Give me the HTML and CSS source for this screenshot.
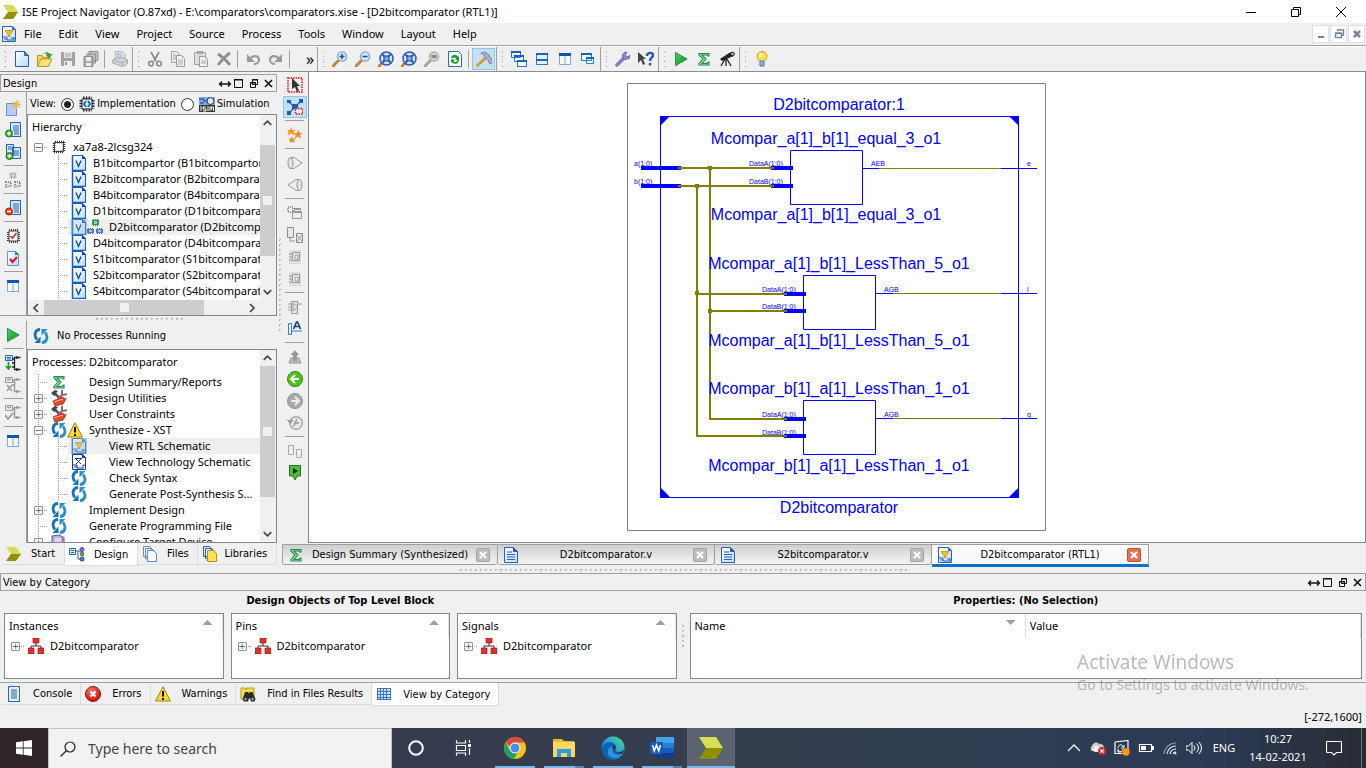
FILE: index.html
```html
<!DOCTYPE html>
<html lang="en">
<head>
<meta charset="utf-8">
<title>ISE Project Navigator</title>
<link rel="stylesheet" href="styles.css">
</head>
<body>
<svg class="defs" aria-hidden="true">
<defs>
<linearGradient id="gPage" x1="0" y1="0" x2="1" y2="1"><stop offset="0" stop-color="#fff"/><stop offset="1" stop-color="#b9dcfb"/></linearGradient>
<linearGradient id="gGreen" x1="0" y1="0" x2="1" y2="1"><stop offset="0" stop-color="#5ad06a"/><stop offset="1" stop-color="#0a8a20"/></linearGradient>
<radialGradient id="gRed" cx=".4" cy=".3" r=".7"><stop offset="0" stop-color="#ff7a66"/><stop offset="1" stop-color="#c80d0d"/></radialGradient>
<linearGradient id="gEdge" x1="0" y1="1" x2="1" y2="0"><stop offset="0" stop-color="#0c59a4"/><stop offset=".5" stop-color="#1b9de2"/><stop offset="1" stop-color="#5be26b"/></linearGradient>
</defs>
<symbol id="ise" viewBox="0 0 16 16"><path d="M0 1h10l5 7H5z" fill="#d8dc55"/><path d="M5 8h10l-5 7H0z" fill="#8f9200"/></symbol>
<symbol id="rtl" viewBox="0 0 16 16"><path d="M1.500.5h10l3 3v12h-13z" fill="url(#gPage)" stroke="#2a62b8"/><path d="M11 0v4h4z" fill="#3b78cc"/><path d="M4 4.500h8L9 8.500v2H7v-2z" fill="#f2c21a" stroke="#b98a00" stroke-width=".7"/><path d="M2 11h4v3h7v-2M10 12h4M3 13h3" fill="none" stroke="#2a62b8"/></symbol>
<symbol id="tech" viewBox="0 0 16 16"><path d="M1.500.5h10l3 3v12h-13z" fill="#fff" stroke="#14429a"/><path d="M11 0v4h4z" fill="#2a2ad0"/><path d="M4 4.500h7M5 5l5 5M10 5l-5 5M2 11h4v3h6v-3h2M3 13h3" fill="none" stroke="#123a90"/></symbol>
<symbol id="v" viewBox="0 0 16 16"><path d="M1.500.5h10l3 3v12h-13z" fill="url(#gPage)" stroke="#0d62b5"/><path d="M1.500.5v15h13" fill="none" stroke="#0d62b5" stroke-width="1.500"/><path d="M11 0v4h4z" fill="#2c37b0"/><path d="M5 5.500l2.500 6 2.500-6" fill="none" stroke="#0b3f7a" stroke-width="1.200"/></symbol>
<symbol id="new" viewBox="0 0 16 16"><path d="M1.500.5h9l4 4v11h-13z" fill="url(#gPage)" stroke="#2a5ea8"/><path d="M10.500.5v4h4z" fill="#5f95d6" stroke="#2a5ea8"/></symbol>
<symbol id="open" viewBox="0 0 16 16"><path d="M.5 15V4.500H5l1 2h6v2" fill="#f5d35a" stroke="#c29410"/><path d="M.5 15.500L4 8h11l-4 7.500z" fill="#ffe27a" stroke="#c29410"/><path d="M6 4c1-3 5-4 7-1h2.500L12 8 8.500 3.500h2C9 2 7 2.500 6 4z" fill="#2fa83a"/></symbol>
<symbol id="save" viewBox="0 0 16 16"><path d="M1 1h14v14H1z" fill="#a2a2a2"/><path d="M4 1h8v6H4z" fill="#e4e4e4"/><path d="M5 3h6M5 5h6" stroke="#a2a2a2"/><path d="M4 10h8v5H4z" fill="#efefef"/><path d="M5 11h2v3H5z" fill="#999"/></symbol>
<symbol id="saveall" viewBox="0 0 16 16"><path d="M6 .5h9v9H6zM3.500 3h9v9h-9z" fill="#c4c4c4" stroke="#8e8e8e"/><path d="M1 5.500h9v10H1z" fill="#a8a8a8" stroke="#8e8e8e"/><path d="M3 6h5v4H3zM3 12h5v3H3z" fill="#eee"/></symbol>
<symbol id="print" viewBox="0 0 16 16"><path d="M4 8L3 .5h7l3 3V8" fill="#d9e3ee" stroke="#b0b6bd"/><path d="M1 8.500L4 7h9l2.500 2v3.500l-5 3L.5 12z" fill="#d4d4d4" stroke="#a8a8a8"/><path d="M1 9l9.500 3L15 9M10.500 12v3" fill="none" stroke="#a8a8a8"/><path d="M5 3h4M5 5h5" stroke="#9fb3c8"/></symbol>
<symbol id="cut" viewBox="0 0 16 16"><path d="M4 1l5 9M12 1L7 10" stroke="#8c8c8c" stroke-width="1.700"/><circle cx="4" cy="12.500" r="2.300" fill="none" stroke="#8c8c8c" stroke-width="1.600"/><circle cx="12" cy="12.500" r="2.300" fill="none" stroke="#8c8c8c" stroke-width="1.600"/></symbol>
<symbol id="copy" viewBox="0 0 16 16"><path d="M1.500.5h5l3 3v8h-8z" fill="#eee" stroke="#a3a3a3"/><path d="M6.500 4.500h5l3 3v8h-8z" fill="#f2f2f2" stroke="#9a9a9a"/><path d="M8 9h5M8 11h5M8 13h5M3 4h3M3 6h3M3 8h3" stroke="#aaa"/></symbol>
<symbol id="paste" viewBox="0 0 16 16"><path d="M1.500 1.500h11v12h-11z" fill="#dedede" stroke="#a3a3a3"/><path d="M4.500.5h5v2h-5z" fill="#bbb" stroke="#999"/><path d="M6.500 5.500h5l3 3v7h-8z" fill="#f2f2f2" stroke="#9a9a9a"/><path d="M8 10h5M8 12h5" stroke="#aaa"/></symbol>
<symbol id="del" viewBox="0 0 16 16"><path d="M2 3c5 3 8 6 12 11M14 2C9 5 6 9 2 14" fill="none" stroke="#8f8f8f" stroke-width="2.800"/></symbol>
<symbol id="undo" viewBox="0 0 16 16"><path d="M5 8c3-4 9-4 9 1 0 2-2 4-5 4" fill="none" stroke="#9a9a9a" stroke-width="2.200"/><path d="M2 3v8h8z" fill="#9a9a9a"/></symbol>
<symbol id="redo" viewBox="0 0 16 16"><path d="M11 8C8 4 2 4 2 9c0 2 2 4 5 4" fill="none" stroke="#9a9a9a" stroke-width="2.200"/><path d="M14 3v8H6z" fill="#9a9a9a"/></symbol>
<symbol id="zin" viewBox="0 0 16 16"><path d="M1 15l5-5" stroke="#c98432" stroke-width="3" stroke-linecap="round"/><circle cx="10" cy="5.500" r="4.600" fill="#d4e7fb" stroke="#7fa3d8" stroke-width="1.300"/><path d="M7.500 5.500h5M10 3v5" stroke="#1749a8" stroke-width="1.500"/></symbol>
<symbol id="zout" viewBox="0 0 16 16"><path d="M1 15l5-5" stroke="#c98432" stroke-width="3" stroke-linecap="round"/><circle cx="10" cy="5.500" r="4.600" fill="#d4e7fb" stroke="#7fa3d8" stroke-width="1.300"/><path d="M7.500 5.500h5" stroke="#1749a8" stroke-width="1.500"/></symbol>
<symbol id="zfit" viewBox="0 0 16 16"><path d="M1 15l3-3" stroke="#c98432" stroke-width="3" stroke-linecap="round"/><circle cx="8.500" cy="7.500" r="6.500" fill="#cfe2fb" stroke="#2b5bb5" stroke-width="1.500"/><path d="M4.500 3.500l8 8M12.500 3.500l-8 8" stroke="#153f93" stroke-width="1.600"/><path d="M6 5h5v5H6z" fill="#7fa8e6" stroke="#153f93"/></symbol>
<symbol id="zgray" viewBox="0 0 16 16"><path d="M1 15l5-5" stroke="#a5a5a5" stroke-width="3" stroke-linecap="round"/><circle cx="10" cy="5.500" r="4.600" fill="#d0d0d0" stroke="#aaa" stroke-width="1.300"/><path d="M7.500 4h5v3h-5z" fill="#888"/></symbol>
<symbol id="refresh" viewBox="0 0 16 16"><path d="M1.500.5h10l3 3v12h-13z" fill="#fff" stroke="#3568b0"/><path d="M4 7c1-4 6-4 7-1l1-1v4H8l1.500-1C8 6 6 6 5.500 7.500zM12 9c-1 5-6 4.500-7 2l-1 1V8.500h4L6.500 10c1 1.500 3 1.500 4-1z" fill="#159a2e"/></symbol>
<symbol id="hammer" viewBox="0 0 16 16"><path d="M1.500 14.500L10 6.500" stroke="#e09a28" stroke-width="3" stroke-linecap="round"/><path d="M5 2l4-1 4 3 3 5-1 4-2-1-1-3-3-2-1-3z" fill="#a9b0c2" stroke="#747c92" stroke-width=".8"/></symbol>
<symbol id="cascade" viewBox="0 0 16 16"><path d="M.5.500h9v6h-9zM3.500 4.500h9v6h-9zM6.500 9.500h9v6h-9z" fill="#f5faff" stroke="#2876c4"/><path d="M0 1h10M3 5h10M6 10h10" stroke="#1766bd" stroke-width="2"/></symbol>
<symbol id="tileh" viewBox="0 0 16 16"><path d="M2.500 2.500h11v11h-11z" fill="#e2f0fd" stroke="#2876c4"/><path d="M2 3h12M2 9h12" stroke="#1766bd" stroke-width="2"/></symbol>
<symbol id="tilev" viewBox="0 0 16 16"><path d="M2.500 2.500h11v11h-11z" fill="#f6faff" stroke="#7fa9d6"/><path d="M8 3v11" stroke="#7fa9d6"/><path d="M2 3.500h12" stroke="#0f55a8" stroke-width="3"/></symbol>
<symbol id="float" viewBox="0 0 16 16"><path d="M1.500 2.500h10v7h-10zM6.500 6.500h7v6h-7z" fill="#eef6fe" stroke="#3080c8"/><path d="M1 3h11M6 7h8" stroke="#1766bd" stroke-width="2"/></symbol>
<symbol id="wrench" viewBox="0 0 16 16"><path d="M2 14l7-7" stroke="#7f7fc8" stroke-width="3.500" stroke-linecap="round"/><path d="M8 7a4 4 0 0 1 4-6L10.500 4 12 6l3-1.500A4 4 0 0 1 8 7z" fill="#8a8ad2" stroke="#5c5cab" stroke-width=".8"/></symbol>
<symbol id="whats" viewBox="0 0 16 16"><path d="M0 1v11l3-3 2 5 2-1-2-5h3z" fill="#444"/><path d="M9 5c0-4 6-4 6-1 0 3-3 2-3 6" fill="none" stroke="#2b58b0" stroke-width="2.400"/><path d="M10.800 12h2.500v2.500h-2.500z" fill="#2b58b0"/></symbol>
<symbol id="run" viewBox="0 0 16 16"><path d="M2.500 1.500L14 8 2.500 14.500z" fill="url(#gGreen)" stroke="#1b9a35"/></symbol>
<symbol id="sigma" viewBox="0 0 16 16"><path d="M3 2.500h10V5h-1L11 4H6l4 4-4 4.500h5L12 11h1v3H3v-1.500L7 8 3 4z" fill="#a9dfb5" stroke="#1d8b47" stroke-width="1.100"/></symbol>
<symbol id="scope" viewBox="0 0 16 16"><path d="M1 8l9-6 3-1 2 4-3 1-9 4z" fill="#222"/><circle cx="13.500" cy="3" r="1.800" fill="#8dd7f2" stroke="#111"/><path d="M6 8l-4 7M7 8v7M8 8l4 7" stroke="#222" stroke-width="1.300"/></symbol>
<symbol id="bulb" viewBox="0 0 16 16"><circle cx="8" cy="5.500" r="5" fill="#ffe14d" stroke="#e1a311"/><circle cx="6.500" cy="4" r="2" fill="#fff8b8"/><path d="M6 10h4v5H6z" fill="#84b6e6" stroke="#4a79ab"/></symbol>
<symbol id="cursor" viewBox="0 0 16 16"><path d="M1 1h14v14H1z" fill="none" stroke="#e11" stroke-width="1.500" stroke-dasharray="1.500 1"/><path d="M5 1v11l3-2 2 5 2-1-2-5h3z" fill="#333"/></symbol>
<symbol id="zoomsel" viewBox="0 0 16 16"><path d="M1 2l12 11M15 1L2 14" stroke="#2b62ae" stroke-width="1.400"/><path d="M0 1h4v3H0zM12 0h4v4h-4zM0 12h4v4H0zM5 5h6v5H5z" fill="#225ba9"/><path d="M8.500 9.500h7v5.500h-7z" fill="#e7f2fc" stroke="#e11" stroke-width="1.300" stroke-dasharray="1.500 1"/></symbol>
<symbol id="stars" viewBox="0 0 16 16"><path d="M4 0l1.500 3H9L6.500 5l1 3.500L4 6.500 1 8.500 1.500 5 0 3h3z" fill="#f59a1d"/><path d="M11 3l1.500 3h3L13 8l1 3.500-3-2-3 2L8.500 8 7 6h3zM5 9l1 2.500h3L7 13l.5 3L5 14.500 2.500 16l.5-3-2-1.500h3z" fill="#f28b2a"/></symbol>
<symbol id="conein" viewBox="0 0 16 16"><path d="M3 2.500h4l8 5.500-8 5.500H3z" fill="#eee" stroke="#999"/><ellipse cx="3.500" cy="8" rx="2.500" ry="5.500" fill="#e4e4e4" stroke="#999"/></symbol>
<symbol id="coneout" viewBox="0 0 16 16"><path d="M13 2.500H9L1 8l8 5.500h4z" fill="#eee" stroke="#999"/><ellipse cx="12.500" cy="8" rx="2.500" ry="5.500" fill="#e4e4e4" stroke="#999"/></symbol>
<symbol id="gwin" viewBox="0 0 16 16"><path d="M1 2h5v5H1z" fill="none" stroke="#999" stroke-width="2" stroke-dasharray="1 1"/><path d="M5.500 6.500h9v7h-9z" fill="#eee" stroke="#999"/><path d="M7 4h7M5 7h10" stroke="#999" stroke-width="2"/></symbol>
<symbol id="gpush" viewBox="0 0 16 16"><path d="M.5.500h6v10h-6zM9.500 6.500h6v9h-6z" fill="#e8e8e8" stroke="#8d8d8d"/><path d="M3 11v3h5M10 8l5 6M15 8l-5 6" stroke="#999" fill="none"/></symbol>
<symbol id="gchip" viewBox="0 0 16 16"><path d="M2 1h12v14H2z" fill="#ddd"/><path d="M5.500 3.500h7v8h-7z" fill="#eee" stroke="#999"/><path d="M2 5h3M2 8h3M2 11h3M8 6h3v4H8z" fill="none" stroke="#999"/></symbol>
<symbol id="ggate" viewBox="0 0 16 16"><path d="M4.500 2.500h6v12h-6z" fill="#e6e6e6" stroke="#999"/><path d="M1 5h3M1 8h3M1 11h3M10 5h5M6 4l5 4-5 4z" fill="none" stroke="#999"/></symbol>
<symbol id="textA" viewBox="0 0 16 16"><path d="M1.500 2.500h3v11h-3z" fill="#eaf4ff" stroke="#2e86d6"/><path d="M4 10h11" stroke="#2e86d6"/><path d="M6.500 8l3-7h1l3 7M8 5.500h4" fill="none" stroke="#1e3f8c" stroke-width="1.700"/></symbol>
<symbol id="gup" viewBox="0 0 16 16"><path d="M2 14l2-5h8l2 5z" fill="#bbb" stroke="#999"/><path d="M8 1l4 5h-2v6H6V6H4z" fill="#999"/></symbol>
<symbol id="gback" viewBox="0 0 16 16"><circle cx="8" cy="8" r="7.500" fill="#4fc21f" stroke="#2d8f0d"/><path d="M8 4L4 8l4 4M4.500 8H12" fill="none" stroke="#fff" stroke-width="2"/></symbol>
<symbol id="gfwd" viewBox="0 0 16 16"><circle cx="8" cy="8" r="7.500" fill="#aaa" stroke="#8f8f8f"/><path d="M8 4l4 4-4 4M11.500 8H4" fill="none" stroke="#eee" stroke-width="2"/></symbol>
<symbol id="ghist" viewBox="0 0 16 16"><circle cx="9" cy="8" r="6.300" fill="#e8e8e8" stroke="#aaa" stroke-width="1.500"/><path d="M10 4L8 8h4M6 11l3-3" fill="none" stroke="#999" stroke-width="1.300"/><path d="M0 5h7l-4 4z" fill="#999"/></symbol>
<symbol id="gpair" viewBox="0 0 16 16"><path d="M1.500 2.500h5v9h-5zM9.500 6.500h5v8h-5z" fill="#eee" stroke="#aaa"/></symbol>
<symbol id="gflag" viewBox="0 0 16 16"><path d="M2.500.5h11v10.500h-3.500l-2 4-2-4H2.500z" fill="#4cbf3a" stroke="#27761b"/><path d="M6 3l5 3-5 3z" fill="#222"/></symbol>
<symbol id="newsrc" viewBox="0 0 16 16"><path d="M1.500 3.500h10v12h-10z" fill="#b9cde8" stroke="#6d93c4"/><path d="M11.500 0v9M7 4.500h9M8.500 1.500l6 6M14.500 1.500l-6 6" stroke="#efb84a" stroke-width="1.200"/></symbol>
<symbol id="addsrc" viewBox="0 0 16 16"><path d="M5.500.5h10v14h-10z" fill="#d7e9fb" stroke="#1f66b8"/><path d="M8 4h6M8 6h6M8 8h6M9 10h5M9 12h5" stroke="#2565ab"/><circle cx="4" cy="11.500" r="3.500" fill="#3dae34" stroke="#1c7d18"/><path d="M2 11.500h4M4 9.500v4" stroke="#fff" stroke-width="1.400"/></symbol>
<symbol id="addcopy" viewBox="0 0 16 16"><path d="M1.500.5h7v11h-7zM7.500 3.500h8v11h-8z" fill="#d7e9fb" stroke="#1f66b8"/><path d="M9 7h5M9 9h5M9 11h5M3 3h4M3 5h4" stroke="#2565ab"/><circle cx="4.500" cy="12" r="3.500" fill="#3dae34" stroke="#1c7d18"/><path d="M2.500 12h4M4.500 10v4" stroke="#fff" stroke-width="1.400"/></symbol>
<symbol id="gsquares" viewBox="0 0 16 16"><path d="M5.500 1.500h5v4h-5zM1 10h5v4.500H1zM10 10h5v4.500h-5z" fill="#e4e4e4"/><path d="M5.500 1.500h5v4h-5zM1 10h5v4.500H1zM10 10h5v4.500h-5z" fill="none" stroke="#8f8f8f" stroke-width="2" stroke-dasharray="1 1"/></symbol>
<symbol id="squares" viewBox="0 0 16 16"><path d="M5 0h7v7H5z" fill="#2f9c56"/><path d="M7 2h3v3H7z" fill="#8fd7a6"/><path d="M0 9h7v6H0zM9 9h7v6H9z" fill="#4f78c0"/><path d="M2 11h3v2H2zM11 11h3v2h-3z" fill="#a9c4ee"/><path d="M5 .5h7M5 6.500h7M0 9.500h7M0 14.500h7M9 9.500h7M9 14.500h7" stroke="#efefef" stroke-dasharray="1 1"/></symbol>
<symbol id="remsrc" viewBox="0 0 16 16"><path d="M5.500.5h10v14h-10z" fill="#d7e9fb" stroke="#1f66b8"/><path d="M8 4h6M8 6h6M8 8h6M9 10h5M9 12h5" stroke="#2565ab"/><circle cx="4" cy="11.500" r="3.500" fill="#e83a22" stroke="#b01d0d"/><path d="M2 11.500h4" stroke="#fff" stroke-width="1.600"/></symbol>
<symbol id="chipcheck" viewBox="0 0 16 16"><path d="M4 3h9v10H4z" fill="#fff" stroke="#444"/><path d="M4 2h9M4 14h9M3 4v9M14 4v9" stroke="#444" stroke-width="2" stroke-dasharray="1 1"/><path d="M5.500 8l2 2 4-5" fill="none" stroke="#d22" stroke-width="1.700"/></symbol>
<symbol id="chip" viewBox="0 0 16 16"><path d="M3.500 3.500h9v9h-9z" fill="#f4f4f4" stroke="#444"/><path d="M4 3h9M3 13h9M3 4v9M13 3v9" stroke="#333" stroke-width="2.500" stroke-dasharray="1 1"/></symbol>
<symbol id="doccheck" viewBox="0 0 16 16"><path d="M2.500 1.500h8l3 3v11h-11z" fill="url(#gPage)" stroke="#6a95cc"/><path d="M10 1v4h4z" fill="#3b78cc"/><path d="M5 9l2.500 3L12 7" fill="none" stroke="#d3201c" stroke-width="2.200"/></symbol>
<symbol id="impl" viewBox="0 0 16 16"><path d="M4 2h9M4 14h9M2 4v9M14 4v9" stroke="#222" stroke-width="3" stroke-dasharray="1.500 1.300"/><path d="M3 3h10v10H3z" fill="#e5f1fd" stroke="#222"/><path d="M7 5L5 8l2 3M9 5l2 3-2 3" fill="none" stroke="#1670bf" stroke-width="2"/></symbol>
<symbol id="isim" viewBox="0 0 16 16"><path d="M0 1h16v8H0z" fill="#79aee6"/><path d="M0 3h5v2h3M1 7h4" fill="none" stroke="#173f86"/><circle cx="11.500" cy="5" r="3.500" fill="#dde5ee" stroke="#333"/><path d="M0 9h16v7H0z" fill="#333"/><path d="M2 10v5M7 11H4v2h3v2H4M9 10v5M11 15v-4h3.500v4M12.700 11v3" fill="none" stroke="#fff"/></symbol>
<symbol id="cycle" viewBox="0 0 16 16"><path d="M7 1.500C2 1.500.5 7.500 4 11.500" fill="none" stroke="#1673b8" stroke-width="2.800"/><path d="M7.500 8.500V15H1.500z" fill="#1673b8"/><path d="M9 14.500c5 0 6.500-6 3-10" fill="none" stroke="#2a8fce" stroke-width="2.800"/><path d="M8.500 7.500V1h6z" fill="#2a8fce"/></symbol>
<symbol id="warn" viewBox="0 0 16 16"><path d="M8 .8L15.500 15H.5z" fill="#ffd92e" stroke="#a08312" stroke-linejoin="round"/><path d="M8 5v5.500M8 12v2" stroke="#111" stroke-width="2"/></symbol>
<symbol id="tools" viewBox="0 0 16 16"><path d="M2 2l9 8" stroke="#555" stroke-width="2.500"/><path d="M0 3l4-3 3 1-4 5z" fill="#444"/><path d="M7 9l5-5" stroke="#777" stroke-width="2.200"/><path d="M11 4V0M12 5l4-1" stroke="#666" stroke-width="1.800"/><path d="M2 11l9-4 4 2-3 5-8 2z" fill="#e2492c" stroke="#a82a12" stroke-width=".8"/><path d="M3 12l9-3" stroke="#ffb29d"/></symbol>
<symbol id="config" viewBox="0 0 16 16"><path d="M1 2l7-1 4 2v9H4L1 9z" fill="#b9b5df" stroke="#5c5690"/><path d="M4 5h6M4 7h6" stroke="#fff"/><path d="M13 3v8M10 9l3 3 3-3" fill="none" stroke="#b33a6a"/></symbol>
<symbol id="pimpl" viewBox="0 0 16 16"><path d="M.5.500h7v5h-7z" fill="#dcecff" stroke="#2a66b2"/><path d="M2 2.500h4M2 4h4" stroke="#2a66b2"/><path d="M3.500 7v6M1 11l2.500 3L6 11" fill="none" stroke="#119a2e" stroke-width="1.700"/><path d="M15.500 2.500h-6v12h6M7 4h3M7 8h3M7 12h3M12 1v3M12 13v3" fill="none" stroke="#222" stroke-width="1.300"/></symbol>
<symbol id="pgx" viewBox="0 0 16 16"><path d="M.5.500h7v5h-7z" fill="#eee" stroke="#999"/><path d="M2 2.500h4M2 8l5 6M7 8l-5 6" stroke="#999" stroke-width="1.500"/><path d="M15.500 2.500h-6v12h6M7 4h3M7 8h3M12 1v3M12 13v3" fill="none" stroke="#999" stroke-width="1.500"/></symbol>
<symbol id="pgc" viewBox="0 0 16 16"><path d="M.5.500h7v5h-7z" fill="#eee" stroke="#999"/><path d="M2 2.500h4M0 10l3 4 5-6" fill="none" stroke="#999" stroke-width="1.700"/><path d="M15.500 2.500h-6v10h6M7 4h3M12 1v3M12 11v3" fill="none" stroke="#999" stroke-width="1.500"/></symbol>
<symbol id="designtab" viewBox="0 0 16 16"><path d="M.5 2.500h6v6h-6z" fill="#dcecff" stroke="#2a5ea8"/><path d="M2 4.500h3M2 6.500h3M7 5h2v8h3M9 5h3" fill="none" stroke="#2a5ea8"/><circle cx="13" cy="3.500" r="2" fill="#9a6fd0" stroke="#553089"/><circle cx="13" cy="8" r="1.800" fill="#5ab868" stroke="#24723a"/><circle cx="13" cy="13" r="2" fill="#5b7fd0" stroke="#29488c"/></symbol>
<symbol id="files" viewBox="0 0 16 16"><path d="M1.500.5h6l2 2v8h-8zM3.500 2.500h6l2 2v8h-8z" fill="#eaf1fb" stroke="#6a8ec4"/><path d="M5.500 4.500h6l3 3v8h-9z" fill="#f7faff" stroke="#6a8ec4"/></symbol>
<symbol id="libs" viewBox="0 0 16 16"><path d="M1.500.5h6l2 2v8h-8zM3.500 2.500h6l2 2v8h-8z" fill="#dcebff" stroke="#2a62b8"/><path d="M5.500 4.500h6l3 3v8h-9z" fill="#ffe14d" stroke="#c09000"/></symbol>
<symbol id="doc" viewBox="0 0 16 16"><path d="M1.500.5h9l4 4v11h-13z" fill="url(#gPage)" stroke="#2a5eb8"/><path d="M10 0v5h5z" fill="#2a5eb8"/><path d="M4 5h5M4 7.500h8M4 10h8M4 12.500h8" stroke="#2a5eb8" stroke-width="1.200"/></symbol>
<symbol id="console" viewBox="0 0 16 16"><path d="M2.500.5h11v15h-11z" fill="#e9f4ff" stroke="#1e66bd"/><path d="M5 4h6M5 6h6M5 8h6M5 10h6M5 12h6" stroke="#1e5ba6"/></symbol>
<symbol id="error" viewBox="0 0 16 16"><circle cx="8" cy="8" r="7.500" fill="url(#gRed)" stroke="#a50b0b"/><path d="M5.500 5.500l5 5M10.500 5.500l-5 5" stroke="#fff" stroke-width="2.300"/></symbol>
<symbol id="find" viewBox="0 0 16 16"><path d="M1 13V2h4l1 2 1-2h7v9z" fill="#f1dd55" stroke="#b49a1a"/><path d="M5 6h3l1 1.500L10 6h2.500l3 7-1 2.500h-3.500l-1-3-1 0-1 3H4l-1.500-2z" fill="#2b2b2b"/><circle cx="5.500" cy="13" r="1.200" fill="#aaa"/><circle cx="12.500" cy="13" r="1.200" fill="#aaa"/></symbol>
<symbol id="grid" viewBox="0 0 16 16"><path d="M1 2h14v12H1z" fill="#cfe4fb"/><path d="M1 2.500h14M1 5.500h14M1 8.500h14M1 11.500h14M1 13.500h14M1.500 2v12M4.500 2v12M7.500 2v12M10.500 2v12M14.500 2v12" stroke="#3b74c2"/></symbol>
<symbol id="org" viewBox="0 0 16 16"><path d="M5 0h6v5H5zM0 10h6v6H0zM10 10h6v6h-6z" fill="#e3302d" stroke="#b21414" stroke-width=".7"/><path d="M8 5v3M3 10V8h10v2" fill="none" stroke="#333"/></symbol>
<symbol id="winctl" viewBox="0 0 60 12"><path d="M4 6h10M6 3.500L3.500 6 6 8.500M12 3.500L14.500 6 12 8.500" fill="none" stroke="#111" stroke-width="1.300"/><path d="M18.500 1.500h8v8h-8zM18 2h9" fill="none" stroke="#111"/><path d="M36.500 1.500h5v5h-5zM34.500 4.500h5v5h-5z" fill="#f0f0f0" stroke="#111"/><path d="M36 2h6M34 5h6" stroke="#111"/><path d="M49 2l7 7M56 2l-7 7" stroke="#111" stroke-width="1.600"/></symbol>
<symbol id="up" viewBox="0 0 16 16"><path d="M4 10l4-4 4 4" fill="none" stroke="#444" stroke-width="1.700"/></symbol>
<symbol id="down" viewBox="0 0 16 16"><path d="M4 6l4 4 4-4" fill="none" stroke="#444" stroke-width="1.700"/></symbol>
<symbol id="left" viewBox="0 0 16 16"><path d="M10 4L6 8l4 4" fill="none" stroke="#444" stroke-width="1.700"/></symbol>
<symbol id="right" viewBox="0 0 16 16"><path d="M6 4l4 4-4 4" fill="none" stroke="#444" stroke-width="1.700"/></symbol>
</svg>

<div class="app">
<header class="titlebar">
  <svg class="ic"><use href="#ise"/></svg>
  <h1>ISE Project Navigator (O.87xd) - E:\comparators\comparators.xise - [D2bitcomparator (RTL1)]</h1>
  <button aria-label="Minimize"><svg viewBox="0 0 12 12"><path d="M1 6.500h10" stroke="#000"/></svg></button>
  <button aria-label="Restore"><svg viewBox="0 0 12 12"><path d="M1.500 3.500h7v7h-7zM3.500 3V1.500h7v7H9" fill="none" stroke="#000"/></svg></button>
  <button aria-label="Close"><svg viewBox="0 0 12 12"><path d="M1 1l10 10M11 1L1 11" stroke="#000"/></svg></button>
</header>
<nav class="menubar">
  <svg class="ic"><use href="#rtl"/></svg>
  <button>File</button><button>Edit</button><button>View</button><button>Project</button><button>Source</button><button>Process</button><button>Tools</button><button>Window</button><button>Layout</button><button>Help</button>
  <div class="mdi">
    <button aria-label="Minimize document"><svg viewBox="0 0 12 12"><path d="M3 9h6" stroke="#75859a" stroke-width="2"/></svg></button>
    <button aria-label="Restore document"><svg viewBox="0 0 12 12"><path d="M4.500 3V2h6v5H9M2.500 5.500h6v4h-6zM2 5h7M4 2h7" fill="none" stroke="#75859a" stroke-width="1.400"/></svg></button>
    <button aria-label="Close document"><svg viewBox="0 0 12 12"><path d="M3 3l6 6M9 3L3 9" stroke="#75859a" stroke-width="2.500"/></svg></button>
  </div>
</nav>
<div class="toolbars">
  <div class="group"><i class="grip"></i>
    <button aria-label="New"><svg class="ic"><use href="#new"/></svg></button><button aria-label="Open"><svg class="ic"><use href="#open"/></svg></button><button aria-label="Save"><svg class="ic"><use href="#save"/></svg></button><button aria-label="Save all"><svg class="ic"><use href="#saveall"/></svg></button><i class="sep"></i><button aria-label="Print"><svg class="ic"><use href="#print"/></svg></button>
  </div>
  <div class="group"><i class="grip"></i>
    <button aria-label="Cut"><svg class="ic"><use href="#cut"/></svg></button><button aria-label="Copy"><svg class="ic"><use href="#copy"/></svg></button><button aria-label="Paste"><svg class="ic"><use href="#paste"/></svg></button><button aria-label="Delete"><svg class="ic"><use href="#del"/></svg></button><i class="sep"></i><button aria-label="Undo"><svg class="ic"><use href="#undo"/></svg></button><button aria-label="Redo"><svg class="ic"><use href="#redo"/></svg></button><i class="sep"></i><button class="more" aria-label="More">»</button>
  </div>
  <div class="group"><i class="grip"></i>
    <button aria-label="Zoom in"><svg class="ic"><use href="#zin"/></svg></button><button aria-label="Zoom out"><svg class="ic"><use href="#zout"/></svg></button><button aria-label="Zoom to full view"><svg class="ic"><use href="#zfit"/></svg></button><button aria-label="Zoom to box"><svg class="ic"><use href="#zfit"/></svg></button><button aria-label="Zoom to selected"><svg class="ic"><use href="#zgray"/></svg></button><button aria-label="Refresh"><svg class="ic"><use href="#refresh"/></svg></button><i class="sep"></i><button class="on" aria-label="Build"><svg class="ic"><use href="#hammer"/></svg></button>
  </div>
  <div class="group"><i class="grip"></i>
    <button aria-label="Cascade"><svg class="ic"><use href="#cascade"/></svg></button><button aria-label="Tile horizontally"><svg class="ic"><use href="#tileh"/></svg></button><button aria-label="Tile vertically"><svg class="ic"><use href="#tilev"/></svg></button><button aria-label="Float"><svg class="ic"><use href="#float"/></svg></button>
  </div>
  <div class="group"><i class="grip"></i>
    <button aria-label="Preferences"><svg class="ic"><use href="#wrench"/></svg></button><button aria-label="What's this"><svg class="ic"><use href="#whats"/></svg></button>
  </div>
  <div class="group"><i class="grip"></i>
    <button aria-label="Run"><svg class="ic"><use href="#run"/></svg></button><button aria-label="Summary"><svg class="ic"><use href="#sigma"/></svg></button><button aria-label="Analyze"><svg class="ic"><use href="#scope"/></svg></button>
  </div>
  <div class="group last"><i class="grip"></i><button aria-label="Tips"><svg class="ic"><use href="#bulb"/></svg></button></div>
</div>

<div class="work">
  <aside class="dock">
    <div class="docktitle"><span>Design</span><svg class="winctl"><use href="#winctl"/></svg></div>
    <section class="upper">
      <div class="strip">
        <button aria-label="New source"><svg class="ic"><use href="#newsrc"/></svg></button><button aria-label="Add source"><svg class="ic"><use href="#addsrc"/></svg></button><button aria-label="Add copy of source"><svg class="ic"><use href="#addcopy"/></svg></button><i class="sep"></i><button aria-label="Set as top"><svg class="ic"><use href="#gsquares"/></svg></button><i class="sep"></i><button aria-label="Remove source"><svg class="ic"><use href="#remsrc"/></svg></button><i class="sep"></i><button aria-label="Design properties"><svg class="ic"><use href="#chipcheck"/></svg></button><button aria-label="Source properties"><svg class="ic"><use href="#doccheck"/></svg></button><i class="sep"></i><button aria-label="Columns"><svg class="ic"><use href="#tilev"/></svg></button>
      </div>
      <div class="pane">
        <div class="viewrow"><span>View:</span>
          <input type="radio" name="view" id="vi" checked><label for="vi"><svg class="ic"><use href="#impl"/></svg>Implementation</label>
          <input type="radio" name="view" id="vs"><label for="vs"><svg class="ic"><use href="#isim"/></svg>Simulation</label>
        </div>
        <div class="treebox">
          <div class="treeview">
            <div class="thead">Hierarchy</div>
            <ul class="tree">
              <li><i class="rail h"><button class="exp" aria-label="Collapse">−</button></i><svg class="ic"><use href="#chip"/></svg><span>xa7a8-2lcsg324</span></li>
              <li class="l2"><i class="rail v h"></i><svg class="ic"><use href="#v"/></svg><span>B1bitcompartor (B1bitcompartor.v)</span></li>
              <li class="l2"><i class="rail v h"></i><svg class="ic"><use href="#v"/></svg><span>B2bitcomparator (B2bitcomparator.v)</span></li>
              <li class="l2"><i class="rail v h"></i><svg class="ic"><use href="#v"/></svg><span>B4bitcomparator (B4bitcomparator.v)</span></li>
              <li class="l2"><i class="rail v h"></i><svg class="ic"><use href="#v"/></svg><span>D1bitcomparator (D1bitcomparator.v)</span></li>
              <li class="l2 sel"><i class="rail v h"></i><svg class="ic tint"><use href="#v"/></svg><svg class="ic second"><use href="#squares"/></svg><span>D2bitcomparator (D2bitcomparator.v)</span></li>
              <li class="l2"><i class="rail v h"></i><svg class="ic"><use href="#v"/></svg><span>D4bitcomparator (D4bitcomparator.v)</span></li>
              <li class="l2"><i class="rail v h"></i><svg class="ic"><use href="#v"/></svg><span>S1bitcomparator (S1bitcomparator.v)</span></li>
              <li class="l2"><i class="rail v h"></i><svg class="ic"><use href="#v"/></svg><span>S2bitcomparator (S2bitcomparator.v)</span></li>
              <li class="l2"><i class="rail v h"></i><svg class="ic"><use href="#v"/></svg><span>S4bitcomparator (S4bitcomparator.v)</span></li>
            </ul>
          </div>
          <div class="vbar"><svg class="ic"><use href="#up"/></svg><i class="gap"></i><i class="thumb t1"></i><i class="rest"></i><svg class="ic"><use href="#down"/></svg></div>
          <div class="hbar"><svg class="ic"><use href="#left"/></svg><i class="thumb"></i><i class="rest"></i><svg class="ic"><use href="#right"/></svg></div>
        </div>
      </div>
    </section>
    <div class="hsplit"></div>
    <section class="lower">
      <div class="strip">
        <button aria-label="Run process"><svg class="ic"><use href="#run"/></svg></button><i class="sep"></i><button aria-label="Implement top"><svg class="ic"><use href="#pimpl"/></svg></button><button aria-label="Stop"><svg class="ic"><use href="#pgx"/></svg></button><i class="sep"></i><button aria-label="Force up to date"><svg class="ic"><use href="#pgc"/></svg></button><i class="sep"></i><button aria-label="Columns"><svg class="ic"><use href="#tilev"/></svg></button>
      </div>
      <div class="pane">
        <div class="running"><svg class="ic"><use href="#cycle"/></svg><span>No Processes Running</span></div>
        <div class="treebox proc">
          <div class="treeview">
            <div class="thead">Processes: D2bitcomparator</div>
            <ul class="tree two">
              <li><i class="rail v h"></i><svg class="ic"><use href="#sigma"/></svg><i class="slot"></i><span>Design Summary/Reports</span></li>
              <li><i class="rail v h"><button class="exp" aria-label="Expand">+</button></i><svg class="ic"><use href="#tools"/></svg><i class="slot"></i><span>Design Utilities</span></li>
              <li><i class="rail v h"><button class="exp" aria-label="Expand">+</button></i><svg class="ic"><use href="#tools"/></svg><i class="slot"></i><span>User Constraints</span></li>
              <li><i class="rail v h"><button class="exp" aria-label="Collapse">−</button></i><svg class="ic"><use href="#cycle"/></svg><svg class="ic second"><use href="#warn"/></svg><span>Synthesize - XST</span></li>
              <li class="sel"><i class="rail v"></i><i class="rail sub v h"></i><svg class="ic tint"><use href="#rtl"/></svg><i class="slot"></i><span>View RTL Schematic</span></li>
              <li><i class="rail v"></i><i class="rail sub v h"></i><svg class="ic"><use href="#tech"/></svg><i class="slot"></i><span>View Technology Schematic</span></li>
              <li><i class="rail v"></i><i class="rail sub v h"></i><svg class="ic"><use href="#cycle"/></svg><i class="slot"></i><span>Check Syntax</span></li>
              <li><i class="rail v"></i><i class="rail sub v h end"></i><svg class="ic"><use href="#cycle"/></svg><i class="slot"></i><span>Generate Post-Synthesis S...</span></li>
              <li><i class="rail v h"><button class="exp" aria-label="Expand">+</button></i><svg class="ic"><use href="#cycle"/></svg><i class="slot"></i><span>Implement Design</span></li>
              <li><i class="rail v h"></i><svg class="ic"><use href="#cycle"/></svg><i class="slot"></i><span>Generate Programming File</span></li>
              <li><i class="rail v h"><button class="exp" aria-label="Expand">+</button></i><svg class="ic"><use href="#config"/></svg><i class="slot"></i><span>Configure Target Device</span></li>
            </ul>
          </div>
          <div class="vbar"><svg class="ic"><use href="#up"/></svg><i class="thumb t2"></i><i class="rest"></i><svg class="ic"><use href="#down"/></svg></div>
        </div>
      </div>
    </section>
    <div class="docktabs">
      <button><svg class="ic"><use href="#ise"/></svg><span>Start</span></button><button class="on"><svg class="ic"><use href="#designtab"/></svg><span>Design</span></button><button><svg class="ic"><use href="#files"/></svg><span>Files</span></button><button><svg class="ic"><use href="#libs"/></svg><span>Libraries</span></button>
    </div>
  </aside>
  <div class="vsplit"></div>
  <div class="editor">
    <div class="stage">
      <div class="vtools">
        <button aria-label="Select"><svg class="ic"><use href="#cursor"/></svg></button><button class="on" aria-label="Zoom area"><svg class="ic"><use href="#zoomsel"/></svg></button><i class="sep"></i><button aria-label="Highlight"><svg class="ic"><use href="#stars"/></svg></button><i class="sep"></i><button aria-label="Input cone"><svg class="ic"><use href="#conein"/></svg></button><button aria-label="Output cone"><svg class="ic"><use href="#coneout"/></svg></button><i class="sep"></i><button aria-label="Add to schematic"><svg class="ic"><use href="#gwin"/></svg></button><button aria-label="Push into block"><svg class="ic"><use href="#gpush"/></svg></button><button aria-label="Show block"><svg class="ic"><use href="#gchip"/></svg></button><button aria-label="Hide block"><svg class="ic"><use href="#gchip"/></svg></button><i class="sep"></i><button aria-label="Show gate"><svg class="ic"><use href="#ggate"/></svg></button><button aria-label="Labels"><svg class="ic"><use href="#textA"/></svg></button><i class="sep"></i><button aria-label="Pop up"><svg class="ic"><use href="#gup"/></svg></button><button aria-label="Back"><svg class="ic"><use href="#gback"/></svg></button><button aria-label="Forward"><svg class="ic"><use href="#gfwd"/></svg></button><button aria-label="History"><svg class="ic"><use href="#ghist"/></svg></button><i class="sep"></i><button aria-label="Compare"><svg class="ic"><use href="#gpair"/></svg></button><button aria-label="Marker"><svg class="ic"><use href="#gflag"/></svg></button>
      </div>
      <main class="canvas">
        <svg class="schematic" viewBox="627 83 420 448" role="img" aria-label="RTL schematic">
          <path d="M627.500 83.500h418v447h-418z" fill="#fff" stroke="#808080"/>
          <path d="M660.500 116.500h358v381h-358z" fill="none" stroke="#00f"/>
          <path d="M660 116h10l-10 10zM1019 116h-10l10 10zM660 498v-11l11 11zM1019 498v-11l-11 11z" fill="#00f"/>
          <g fill="none" stroke="#00f"><path d="M790.500 150.500h72v54h-72zM803.500 275.500h72v54h-72zM803.500 400.500h72v54h-72zM863 168.500h16M1001 168.500h36M876 293.500h17M1001 293.500h36M876 418.500h17M1001 418.500h36"/>
          <path stroke-width="4" d="M641 168h40M641 186h40M771 168h22M771 186h22M784 294h22M784 311h22M784 419h22M784 436h22"/></g>
          <g fill="none" stroke="#808000"><path stroke-width="2" d="M678 168h96M678 186h96M710 168v251h77M697 186v250h90M697 294h90M710 311h77"/><path d="M879 168.500h122M893 293.500h108M893 418.500h108"/></g>
          <path d="M708 166h4v4h-4zM695 184h4v4h-4zM695 291h4v4h-4zM708 309h4v4h-4z" fill="#808000"/>
          <g class="big"><text x="839" y="110">D2bitcomparator:1</text><text x="839" y="513">D2bitcomparator</text><text x="826" y="144">Mcompar_a[1]_b[1]_equal_3_o1</text><text x="826" y="220">Mcompar_a[1]_b[1]_equal_3_o1</text><text x="839" y="269">Mcompar_a[1]_b[1]_LessThan_5_o1</text><text x="839" y="346">Mcompar_a[1]_b[1]_LessThan_5_o1</text><text x="839" y="394">Mcompar_b[1]_a[1]_LessThan_1_o1</text><text x="839" y="471">Mcompar_b[1]_a[1]_LessThan_1_o1</text></g>
          <g class="small"><text x="634" y="166">a(1:0)</text><text x="634" y="184">b(1:0)</text><text x="749" y="166">DataA(1:0)</text><text x="749" y="184">DataB(1:0)</text><text x="762" y="292">DataA(1:0)</text><text x="762" y="309">DataB(1:0)</text><text x="762" y="417">DataA(1:0)</text><text x="762" y="435">DataB(1:0)</text><text x="871" y="166">AEB</text><text x="884" y="292">AGB</text><text x="884" y="417">AGB</text><text x="1027" y="166">e</text><text x="1027" y="292">l</text><text x="1027" y="417">g</text></g>
        </svg>
      </main>
    </div>
    <div class="edtabs">
      <div class="tab"><button class="name"><svg class="ic"><use href="#sigma"/></svg><span>Design Summary (Synthesized)</span></button><button class="x" aria-label="Close tab"><svg viewBox="0 0 14 14"><path d="M4 4l6 6M10 4l-6 6" stroke="#fff" stroke-width="2.200"/></svg></button></div>
      <div class="tab"><button class="name"><svg class="ic"><use href="#doc"/></svg><span>D2bitcomparator.v</span></button><button class="x" aria-label="Close tab"><svg viewBox="0 0 14 14"><path d="M4 4l6 6M10 4l-6 6" stroke="#fff" stroke-width="2.200"/></svg></button></div>
      <div class="tab"><button class="name"><svg class="ic"><use href="#doc"/></svg><span>S2bitcomparator.v</span></button><button class="x" aria-label="Close tab"><svg viewBox="0 0 14 14"><path d="M4 4l6 6M10 4l-6 6" stroke="#fff" stroke-width="2.200"/></svg></button></div>
      <div class="tab on"><button class="name"><svg class="ic"><use href="#rtl"/></svg><span>D2bitcomparator (RTL1)</span></button><button class="x" aria-label="Close tab"><svg viewBox="0 0 14 14"><path d="M4 4l6 6M10 4l-6 6" stroke="#fff" stroke-width="2.200"/></svg></button></div>
    </div>
  </div>
</div>

<div class="hsplit wide"></div>
<section class="category">
  <div class="docktitle"><span>View by Category</span><svg class="winctl"><use href="#winctl"/></svg></div>
  <div class="halves">
    <div class="half">
      <h2>Design Objects of Top Level Block</h2>
      <div class="boxes">
        <div class="box"><div class="bh"><span>Instances</span><i class="asc"></i></div><div class="bi"><i class="rail h"><button class="exp" aria-label="Expand">+</button></i><svg class="ic"><use href="#org"/></svg><span>D2bitcomparator</span></div></div>
        <div class="box"><div class="bh"><span>Pins</span><i class="asc"></i></div><div class="bi"><i class="rail h"><button class="exp" aria-label="Expand">+</button></i><svg class="ic"><use href="#org"/></svg><span>D2bitcomparator</span></div></div>
        <div class="box"><div class="bh"><span>Signals</span><i class="asc"></i></div><div class="bi"><i class="rail h"><button class="exp" aria-label="Expand">+</button></i><svg class="ic"><use href="#org"/></svg><span>D2bitcomparator</span></div></div>
      </div>
    </div>
    <div class="midgrip"></div>
    <div class="half">
      <h2>Properties: (No Selection)</h2>
      <div class="box props">
        <table><thead><tr><th scope="col"><div class="bh"><span>Name</span><i class="desc"></i></div></th><th scope="col"><div class="bh"><span>Value</span></div></th></tr></thead></table>
      </div>
    </div>
  </div>
</section>
<div class="bottomtabs">
  <button><svg class="ic"><use href="#console"/></svg><span>Console</span></button><button><svg class="ic"><use href="#error"/></svg><span>Errors</span></button><button><svg class="ic"><use href="#warn"/></svg><span>Warnings</span></button><button><svg class="ic"><use href="#find"/></svg><span>Find in Files Results</span></button><button class="on"><svg class="ic"><use href="#grid"/></svg><span>View by Category</span></button>
</div>
<div class="status">[-272,1600]</div>

<footer class="taskbar">
  <button class="start" aria-label="Start"><svg viewBox="0 0 16 16"><path d="M0 2.300L6.800 1.300v6.300H0zM7.600 1.200L16 0v7.600H7.600zM0 8.400h6.800v6.300L0 13.700zM7.600 8.400H16V16l-8.400-1.200z" fill="#fff"/></svg></button>
  <label class="search"><svg viewBox="0 0 16 16"><circle cx="10" cy="6" r="5" fill="none" stroke="#222" stroke-width="1.200"/><path d="M6.500 9.500L.5 15.500" stroke="#222" stroke-width="1.300"/></svg><input type="text" placeholder="Type here to search" aria-label="Search"></label>
  <button class="tb" aria-label="Cortana"><svg viewBox="0 0 24 24"><circle cx="12" cy="12" r="6.800" fill="none" stroke="#fff" stroke-width="2"/></svg></button>
  <button class="tb" aria-label="Task view"><svg viewBox="0 0 24 24"><path d="M4.500 4v3h9V4M4.500 20v-3h9v3M4.500 9.500h9v5h-9zM17.500 4v3M17.500 12v7" fill="none" stroke="#fff" stroke-width="1.200"/><path d="M16 8h3v3h-3z" fill="#fff"/></svg></button>
  <div class="apps">
    <button class="tb full" aria-label="Chrome"><svg viewBox="0 0 24 24"><circle cx="12" cy="12" r="11" fill="#fbc116"/><path d="M2.500 6.500A11 11 0 0 1 21.500 6.500H12a5.500 5.500 0 0 0-5 4z" fill="#dd4b3e"/><path d="M2.500 6.500A11 11 0 0 0 11 23l5-8.500a5.500 5.500 0 0 1-9 0z" fill="#1fa15d"/><circle cx="12" cy="12" r="5" fill="#4c8bf5" stroke="#fff"/></svg></button>
    <button class="tb multi" aria-label="File Explorer"><svg viewBox="0 0 24 24"><path d="M1 3h9l2 2h10v16H1z" fill="#f4b81c"/><path d="M1 6h22v15H1z" fill="#ffd866"/><path d="M5 21v-8h14v8h-4v-4H9v4z" fill="#2f9be0"/></svg></button>
    <button class="tb full" aria-label="Edge"><svg viewBox="0 0 24 24"><circle cx="12" cy="12" r="11.500" fill="url(#gEdge)"/><path d="M1 13C2 5 14 4 15 11c0 2-1 3-1 3 1 3 7 2 9 0-2 6-6 9-11 9-6 0-11-4-11-10z" fill="#0e63b8"/><path d="M8 20c-3-5 0-10 5-10-2 2-2 6 1 8 3 1 6 1 8-1-3 5-9 7-14 3z" fill="#2c93dd"/><path d="M14 14c2-2 1-5-1-5s-3 3 0 6c3 3 9 1 10-2 0 1 0 3-1 4-3 2-8 1-8-3z" fill="#363e50"/></svg></button>
    <button class="tb multi" aria-label="Word"><svg viewBox="0 0 24 24"><path d="M6 1h18v6H6z" fill="#41a5ee"/><path d="M6 7h18v5H6z" fill="#2b7cd3"/><path d="M6 12h18v5H6z" fill="#185abd"/><path d="M6 17h18v5H6z" fill="#103f91"/><path d="M0 6h13v12H0z" fill="#185abd"/><path d="M2.500 9l1.800 6 2.200-6 2.200 6 1.800-6" fill="none" stroke="#fff" stroke-width="1.500"/></svg></button>
    <button class="tb active" aria-label="ISE Project Navigator"><svg viewBox="0 0 24 24"><path d="M0 1h17l7 11H7z" fill="#dadd55"/><path d="M7 12h17l-7 11H0z" fill="#8d9000"/></svg></button>
  </div>
  <div class="tray">
    <button aria-label="Show hidden icons"><svg viewBox="0 0 16 16"><path d="M2 11l6-6 6 6" fill="none" stroke="#fff" stroke-width="1.300"/></svg></button>
    <button aria-label="OneDrive"><svg viewBox="0 0 16 16"><path d="M2 11a3 3 0 0 1 0-5 4 4 0 0 1 7-2 4 4 0 0 1 5 3v4z" fill="#ccc"/><path d="M5 12a3 3 0 0 1 3-6l7 6z" fill="#f0f0f0"/><circle cx="12" cy="11" r="4" fill="#d32f2f"/><path d="M10.300 9.300l3.400 3.400M13.700 9.300l-3.400 3.400" stroke="#fff" stroke-width="1.200"/></svg></button>
    <button aria-label="Update"><svg viewBox="0 0 16 16"><path d="M1 2l13-1.500v9M1 2v11.500h8" fill="none" stroke="#fff" stroke-width="1.200"/><path d="M4 8c0-4 5-4 5-1M10 5v3H7M4 9v3h3M4 10c2 3 5 1 5-1" fill="none" stroke="#fff"/><circle cx="12" cy="12" r="3.700" fill="#ff9800"/></svg></button>
    <button aria-label="Battery"><svg viewBox="0 0 16 16"><path d="M1.500 4.500h12v7h-12z" fill="none" stroke="#fff" stroke-width="1.200"/><path d="M3 6h5v4H3z" fill="#fff"/><path d="M15 6v4" stroke="#fff" stroke-width="2"/></svg></button>
    <button aria-label="Network"><svg viewBox="0 0 16 16"><path d="M2 14A12 12 0 0 1 14 3" fill="none" stroke="#8d95a2" stroke-width="1.200"/><path d="M5 14a9 9 0 0 1 9-8" fill="none" stroke="#ddd" stroke-width="1.200"/><path d="M8 14a6 6 0 0 1 6-5M11 14a3 3 0 0 1 3-2" fill="none" stroke="#fff" stroke-width="1.200"/><circle cx="13.500" cy="13.500" r="1" fill="#fff"/></svg></button>
    <button aria-label="Volume"><svg viewBox="0 0 16 16"><path d="M0 6h2.500L6 2.500v11L2.500 10H0z" fill="none" stroke="#fff"/><path d="M8 5.500q2 2.500 0 5M10.500 3.500q4 4.500 0 9M13 2q5 6 0 12" fill="none" stroke="#fff"/></svg></button>
    <button class="lang">ENG</button>
    <button class="clock"><span>10:27</span><span>14-02-2021</span></button>
    <button class="note" aria-label="Notifications"><svg viewBox="0 0 16 16"><path d="M.5 1.500h15v11h-5L8 15l-2.500-2.500h-5z" fill="none" stroke="#fff" stroke-width="1.200"/></svg></button>
  </div>
</footer>
</div>
<div class="watermark"><strong>Activate Windows</strong><span>Go to Settings to activate Windows.</span></div>
</body>
</html>
```

FILE: styles.css
```css
:root {
  --ui: "Noto Sans", "Open Sans", sans-serif;
  --tab: "DejaVu Sans Condensed", "Noto Sans", sans-serif;
  --face: #f0f0f0;
  --line: #a0a0a0;
  --frame: #828790;
}
* { box-sizing: border-box; }
body { margin: 0; font: 11px/16px var(--ui); color: #000; background: var(--face); overflow: hidden; }
button { border: 0; padding: 0; margin: 0; background: none; font: inherit; color: inherit; display: flex; align-items: center; justify-content: center; }
ul { list-style: none; margin: 0; padding: 0; }
i { font-style: normal; display: block; flex: none; }
.defs { position: absolute; width: 0; height: 0; }
.ic { width: 16px; height: 16px; flex: none; display: block; }
.app { height: 100vh; display: flex; flex-direction: column; }

.titlebar { display: flex; align-items: center; height: 23px; background: #fff; padding: 0 3px; flex: none; }
.titlebar h1 { font: 11px/16px var(--ui); margin: 0 auto 0 3px; }
.titlebar button { width: 45px; height: 23px; }
.titlebar button svg { width: 12px; height: 12px; }
.menubar { display: flex; align-items: center; height: 23px; flex: none; border-bottom: 1px solid var(--line); gap: 1px; }
.menubar > .ic { margin-left: 1px; }
.menubar > button { padding: 0 8px; height: 22px; }
.menubar > .ic + button { padding-left: 6px; }
.mdi { margin-left: auto; display: flex; gap: 1px; padding-right: 1px; }
.mdi button { width: 17px; height: 18px; background: #fff; border: 1px solid #e0e0e0; }
.mdi svg { width: 12px; height: 12px; }
.toolbars { display: flex; height: 26px; flex: none; border-top: 1px solid #fff; border-bottom: 1px solid #8c8c8c; }
.group { display: flex; align-items: center; padding-right: 1px; border-right: 1px solid var(--line); }
.group.last { border: 0; }
.group button { width: 23px; height: 22px; }
.group .on, .vtools .on { background: #c4e0f8; border: 1px solid #8fc4f0; }
.grip { width: 10px; height: 20px; background: radial-gradient(circle, #b4b4b4 1px, transparent 1px) 4px 0 / 3px 5px repeat-y; }
.group .sep { width: 4px; height: 18px; margin-left: 2px; border-left: 1px solid var(--line); }
.group .more { font: 16px/20px var(--ui); padding-left: 11px; }

.work { flex: 1; min-height: 0; display: flex; }
.dock { width: 277px; flex: none; display: flex; flex-direction: column; }
.docktitle { display: flex; align-items: center; justify-content: space-between; height: 18px; border: 1px solid var(--line); padding: 1px 0 0 2px; font-family: var(--tab); flex: none; }
.dock .docktitle { margin-top: 2px; }
.winctl { width: 60px; height: 12px; flex: none; }
.upper { height: 224px; display: flex; flex: none; }
.lower { flex: 1; min-height: 0; display: flex; }
.strip { width: 27px; flex: none; border-right: 1px solid var(--line); display: flex; flex-direction: column; align-items: center; padding-top: 5px; }
.upper .strip { border-bottom: 1px solid var(--line); }
.lower .strip { padding-top: 3px; }
.strip button, .vtools button { width: 24px; height: 22px; flex: none; }
.strip .sep, .vtools .sep { width: 19px; height: 4px; margin-top: 2px; border-top: 1px solid var(--line); }
.pane { flex: 1; min-width: 0; display: flex; flex-direction: column; }
.viewrow { height: 22px; display: flex; align-items: center; padding: 2px 0 0 3px; font-family: var(--tab); flex: none; white-space: nowrap; }
.viewrow input { appearance: none; width: 13px; height: 13px; flex: none; margin: 0 5px; border: 1px solid #333; border-radius: 50%; background: #fff; }
.viewrow input:checked { background: radial-gradient(circle, #222 3px, #fff 4px); }
.viewrow label { display: flex; align-items: center; gap: 2px; }
.treebox { flex: 1; min-height: 0; border: 1px solid var(--frame); background: #fff; display: grid; grid-template: minmax(0, 1fr) 15px / minmax(0, 1fr) 16px; }
.proc { grid-template-rows: minmax(0, 1fr); }
.treeview { overflow: hidden; }
.thead { padding: 4px 4px; height: 24px; }
.tree li { display: flex; align-items: center; height: 16px; padding-left: 5px; white-space: nowrap; }
.tree .l2 { padding-left: 25px; }
.rail { width: 14px; height: 16px; margin-right: 4px; background-repeat: no-repeat; --vl: repeating-linear-gradient(to bottom, #a0a0a0 0 1px, transparent 1px 2px); --hl: repeating-linear-gradient(to right, #a0a0a0 0 1px, transparent 1px 2px); }
.rail.v { background-image: var(--vl); background-size: 1px 100%; background-position: 5px 0; }
.rail.h { background-image: var(--hl); background-size: 9px 1px; background-position: 5px 8px; }
.rail.v.h { background-image: var(--vl), var(--hl); background-size: 1px 100%, 9px 1px; background-position: 5px 0, 5px 8px; }
.rail.end { background-size: 1px 8px, 9px 1px; }
.rail.sub { margin-left: 2px; }
.exp { width: 9px; height: 9px; margin: 4px 0 0 1px; background: #fff; border: 1px solid #919191; border-radius: 1px; font: 9px/7px "DejaVu Sans", sans-serif; color: #33508a; }
.tree span { margin-left: 6px; }
.sel { background: linear-gradient(#efefef, #efefef) 40px 0 / 100% 100% no-repeat; }
.slot { width: 16px; height: 16px; }
.tint { background: #a9c8e6; }
.tint use { opacity: .7; }
.vbar, .hbar { background: var(--face); display: flex; }
.vbar { flex-direction: column; }
.vbar .ic { width: 15px; }
.gap { height: 14px; }
.rest { flex: 1; }
.thumb { background: linear-gradient(#f0f0f0, #f0f0f0) center / 9px 9px no-repeat #cdcdcd; }
.vbar .thumb { margin-right: 1px; }
.vbar .t1 { height: 111px; }
.vbar .t2 { height: 131px; }
.hbar { grid-column: 1 / -1; padding-right: 16px; }
.hbar .thumb { width: 160px; }
.running { height: 28px; display: flex; align-items: center; gap: 8px; padding: 1px 0 0 6px; font-family: var(--tab); flex: none; }
.hsplit { width: 90px; height: 5px; flex: none; margin: 0 auto; background: radial-gradient(circle, #bbb 1px, transparent 1px) 0 0 / 5px 5px repeat-x; }
.docktabs, .bottomtabs { display: flex; font-family: var(--tab); flex: none; }
.docktabs { height: 24px; padding-left: 2px; }
.docktabs button, .bottomtabs button { height: 22px; border: 1px solid #dcdcdc; border-top: 0; border-left: 0; padding: 0 8px 0 4px; gap: 11px; white-space: nowrap; }
.docktabs button { flex: auto; justify-content: flex-start; gap: 9px; padding: 0 3px 0 4px; }
.docktabs button:last-child { gap: 6px; }
.docktabs .on, .bottomtabs .on { background: #fff; height: 23px; }
.docktabs span, .bottomtabs span { padding-top: 1px; }

.vsplit { width: 5px; flex: none; background: radial-gradient(circle, #bbb 1px, transparent 1px) 0 0 / 5px 5px repeat-y; margin: 165px 0 233px; }
.editor { flex: 1; min-width: 0; display: flex; flex-direction: column; }
.stage { flex: 1; min-height: 0; display: flex; }
.vtools { width: 26px; flex: none; display: flex; flex-direction: column; align-items: center; padding: 2px 1px 0 0; overflow: hidden; }
.canvas { flex: 1; min-width: 0; background: #fff; border: solid var(--frame); border-width: 0 1px 1px 1px; display: flex; align-items: center; justify-content: center; overflow: auto; }
.schematic { width: 420px; height: 448px; flex: none; }
.schematic text { fill: #00f; font-family: "Liberation Sans", Arial, sans-serif; }
.big text { font-size: 16px; text-anchor: middle; }
.small text { font-size: 7px; }
.edtabs { display: flex; height: 24px; flex: none; font-family: var(--tab); align-items: flex-start; padding-top: 1px; }
.tab { flex: 0 1 217px; display: flex; align-items: center; height: 21px; border: 1px solid var(--line); border-width: 1px 1px 1px 0; background: linear-gradient(#cfcfcf, #f4f4f4); padding-right: 7px; border-radius: 0 0 3px 3px; }
.tab:first-child { border-left-width: 1px; flex-basis: 216px; }
.tab .name { flex: 1; padding-left: 5px; }
.tab .name span { flex: 1; }
.x { width: 14px; height: 14px; background: #bdbdbd; border: 1px solid #a2a2a2; border-radius: 2px; }
.x svg { width: 14px; height: 14px; flex: none; }
.tab.on { background: #fafafa; height: 23px; border-bottom: 3px solid #0573c9; border-radius: 0; padding-top: 1px; }
.tab.on .x { background: #e57350; border-color: #cf4a2c; }

.hsplit.wide { width: 450px; height: 6px; }
.category { flex: none; }
.halves { display: grid; grid-template-columns: minmax(0, 1fr) 13px minmax(0, 1fr); padding: 0 4px; height: 92px; border-bottom: 1px solid var(--line); }
.half { display: flex; flex-direction: column; min-width: 0; }
.half h2 { margin: 0; font: bold 11px/16px var(--tab); text-align: center; height: 22px; padding-top: 2px; }
.boxes { display: grid; grid-template-columns: repeat(3, minmax(0, 1fr)); gap: 7px; }
.box { height: 66px; border: 1px solid var(--frame); background: #fff; }
.bh { display: flex; justify-content: space-between; height: 24px; padding: 4px 9px 0 4px; border-right: 1px solid #e2e2e2; }
.asc, .desc { margin-top: 2px; width: 10px; height: 5px; background: var(--line); clip-path: polygon(50% 0, 100% 100%, 0 100%); }
.desc { clip-path: polygon(0 0, 100% 0, 50% 100%); }
.bi { display: flex; align-items: center; padding-left: 5px; }
.bi span { margin-left: 6px; }
.props table { width: 100%; border-collapse: collapse; table-layout: fixed; }
.props th { padding: 0; font-weight: normal; text-align: left; }
.midgrip { background: radial-gradient(circle, #bbb 1px, transparent 1px) 3px 0 / 5px 5px repeat-y; margin: 32px 0; }
.bottomtabs { height: 24px; padding-left: 2px; }
.status { height: 21px; flex: none; text-align: right; padding: 2px 4px 0 0; }

.taskbar { height: 40px; flex: none; display: flex; color: #fff; background: linear-gradient(90deg, #30242a 0, #363c4f 30%, #333f4f 58%, #2b3b55 88%, #2a2c35 100%); }
.start { width: 48px; background: #2f2427; }
.start svg { width: 16px; height: 16px; }
.search { flex: 0 1 344px; background: #f2f2f2; border: 1px solid #c4c4c4; border-bottom: 0; display: flex; align-items: center; padding-left: 11px; gap: 12px; }
.search svg { width: 16px; height: 16px; flex: none; }
.search input { border: 0; background: none; outline: 0; flex: 1; min-width: 0; padding: 0; font: 14px/20px var(--ui); }
.search input::placeholder { color: #444; opacity: 1; }
.tb { width: 48px; height: 40px; }
.tb svg { width: 24px; height: 24px; }
.apps { display: flex; gap: 1px; margin-left: 3px; }
.full { background: linear-gradient(#76b9ed, #76b9ed) 50% 100% / 40px 2px no-repeat; }
.multi { background: linear-gradient(90deg, #76b9ed 31px, #5487b0 31px) 50% 100% / 40px 2px no-repeat; }
.active { background: #5c6370; border-bottom: 2px solid #76b9ed; padding-top: 2px; }
.tray { margin-left: auto; display: flex; align-items: center; }
.tray button { width: 24px; height: 40px; }
.tray svg { width: 16px; height: 16px; }
.tray .lang { width: 36px; }
.tray .clock { flex-direction: column; width: 72px; line-height: 18px; }
.tray .note { width: 48px; padding-right: 8px; border-right: 1px solid #6a7280; margin-right: 4px; }
.watermark { position: fixed; right: 57px; bottom: 73px; display: flex; flex-direction: column; color: rgba(120, 120, 120, .5); pointer-events: none; }
.watermark strong { font: 19px/26px var(--ui); }
.watermark span { font: 14px/20px var(--ui); }
```
